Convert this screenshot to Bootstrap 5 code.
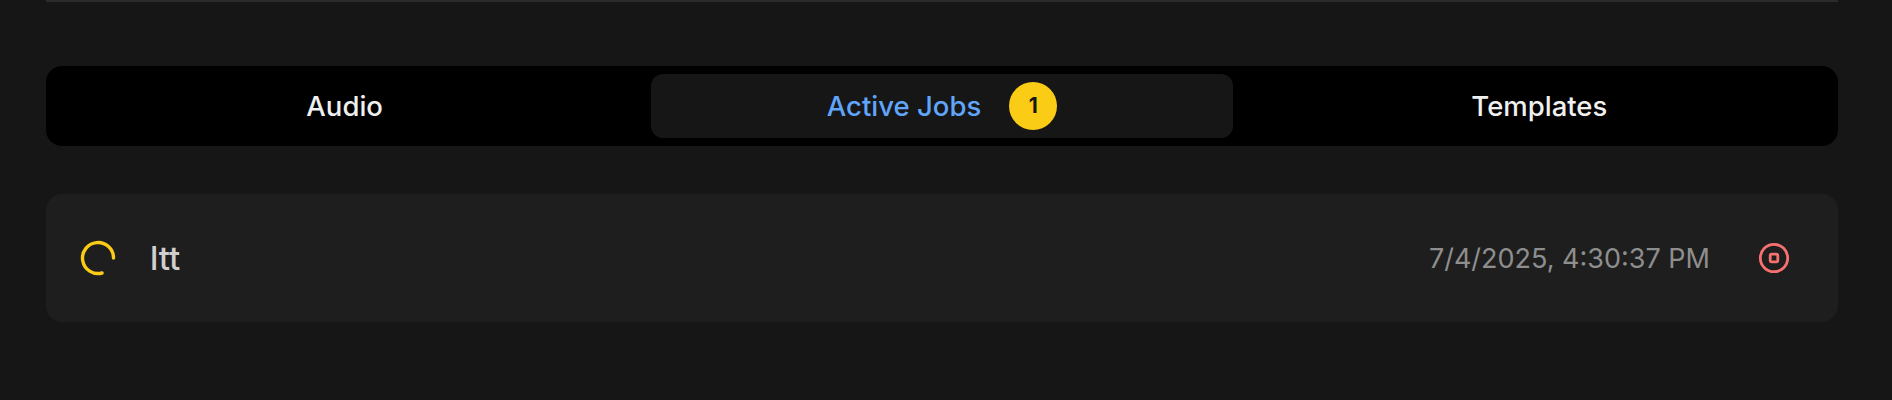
<!DOCTYPE html>
<html lang="en"><head><meta charset="utf-8">
<link href="https://cdn.jsdelivr.net/npm/bootstrap@5.3.0/dist/css/bootstrap.min.css" rel="stylesheet">
<style>
html,body{height:400px;overflow:hidden;background:#161616;font-family:Inter,"Liberation Sans",sans-serif}
.page-wrap{padding:0 54px 0 46px}
.top-rule{height:2px;background:#2b2b2b}
.tab-strip{margin-top:64px;height:80px;background:#000;border-radius:16px;padding:8px;gap:16px}
.tab-item{flex:1 1 0;border:0;background:transparent;color:#f0f0f0;font-size:27.5px;font-weight:500;border-radius:12px;gap:28px}
.tab-item.is-on{background:#161616;color:#60a5fa}
.tab-label{padding-top:2px}
.count-pill{width:48px;height:48px;border-radius:50%;background:#facc15;color:#171717;font-size:21px;font-weight:700}
.job-row{margin-top:48px;height:128px;background:#1e1e1e;border-radius:16px;padding:0 48px 0 34px}
.job-name{color:#cfcfcf;font-size:33px;font-weight:550;margin-left:34px;padding-top:2px}
.job-time{color:#8e8e8e;font-size:27px;margin-right:48px;padding-top:2px}
</style></head><body>
<div class="page-wrap">
<div class="top-rule"></div>
<div class="tab-strip d-flex">
<button class="tab-item d-flex align-items-center justify-content-center"><span class="tab-label">Audio</span></button>
<button class="tab-item is-on d-flex align-items-center justify-content-center"><span class="tab-label">Active Jobs</span><span class="count-pill d-flex align-items-center justify-content-center">1</span></button>
<button class="tab-item d-flex align-items-center justify-content-center"><span class="tab-label">Templates</span></button>
</div>
<div class="job-row d-flex align-items-center">
<svg width="36" height="36" viewBox="0 0 36 36" fill="none"><path d="M33.5 18A15.5 15.5 0 1 0 22 33" stroke="#facc15" stroke-width="3.4" stroke-linecap="round"/></svg>
<span class="job-name flex-grow-1">ltt</span>
<span class="job-time">7/4/2025, 4:30:37 PM</span>
<svg width="32" height="32" viewBox="0 0 32 32" fill="none" stroke="#f87171" stroke-width="2.8"><circle cx="16" cy="16" r="13.7"/><rect x="12.2" y="12.2" width="7.6" height="7.6" rx="1.5"/></svg>
</div>
</div>
<script src="https://cdn.jsdelivr.net/npm/bootstrap@5.3.0/dist/js/bootstrap.bundle.min.js"></script>
</body></html>
